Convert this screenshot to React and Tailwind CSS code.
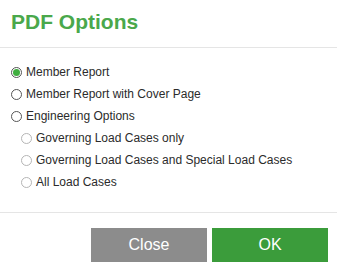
import React from 'react';

function Radio({ checked, light }) {
    return (
        <span
            className={`flex h-[11px] w-[11px] shrink-0 items-center justify-center rounded-full border ${
                light ? 'border-[#b5b5b5]' : 'border-[#555]'
            }`}
        >
            {checked && <span className="h-[7px] w-[7px] rounded-full bg-[#3fae3f]" />}
        </span>
    );
}

const options = [
    { label: 'Member Report', checked: true },
    { label: 'Member Report with Cover Page' },
    { label: 'Engineering Options' },
    { label: 'Governing Load Cases only', sub: true },
    { label: 'Governing Load Cases and Special Load Cases', sub: true },
    { label: 'All Load Cases', sub: true },
];

export default function App() {
    return (
        <div className="h-[274px] w-[337px] bg-white font-['Liberation_Sans',Arial,sans-serif] text-[#2b2b2b]">
            {/* header */}
            <div className="flex h-[48px] items-center border-b border-[#e5e5e5] pl-[11px] pb-[4px]">
                <h1 className="text-[21px] font-bold text-[#4aa84b]">PDF Options</h1>
            </div>

            {/* options */}
            <div className="border-b border-[#e5e5e5] pt-[13px] pb-[19px]">
                {options.map((o) => (
                    <label
                        key={o.label}
                        className={`flex h-[22px] items-center gap-[4px] text-[12px] ${
                            o.sub ? 'pl-[21px]' : 'pl-[11px]'
                        }`}
                    >
                        <Radio checked={o.checked} light={o.sub} />
                        <span>{o.label}</span>
                    </label>
                ))}
            </div>

            {/* footer */}
            <div className="flex justify-end gap-[5px] pt-[15px] pr-[9px]">
                <button className="h-[34px] w-[116px] bg-[#8c8c8c] text-[16px] text-white">
                    Close
                </button>
                <button className="h-[34px] w-[116px] bg-[#3b9c3b] text-[16px] text-white">
                    OK
                </button>
            </div>
        </div>
    );
}
